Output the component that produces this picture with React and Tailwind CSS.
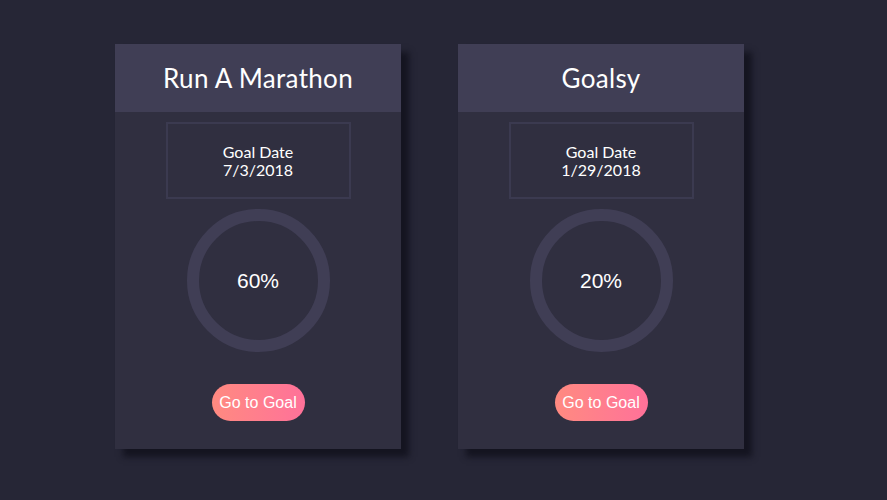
const goals = [
  { title: "Run A Marathon", date: "7/3/2018", progress: 60 },
  { title: "Goalsy", date: "1/29/2018", progress: 20 },
];

function GoalCard({ goal }) {
  return (
    <div className="flex w-[286px] flex-col bg-[#302f40] shadow-[8px_8px_6px_rgba(15,15,25,0.75)]">
      <div className="flex h-[68px] items-center justify-center bg-[#403e55]">
        <h2 className="text-[26px] font-normal tracking-[0.3px] text-white" style={{ fontFamily: "Lato, 'Open Sans', sans-serif" }}>
          {goal.title}
        </h2>
      </div>
      <div className="flex flex-col items-center pt-[10px] pb-[28px]">
        <div
          className="flex h-[77px] w-[185px] flex-col items-center justify-center border-2 border-[#3b3a50] text-[16px] leading-[18px] text-white"
          style={{ fontFamily: "Lato, 'Open Sans', sans-serif" }}
        >
          <span>Goal Date</span>
          <span>{goal.date}</span>
        </div>
        <div className="mt-[10px] flex h-[143px] w-[143px] items-center justify-center rounded-full border-[12px] border-[#403e55]">
          <span className="text-[21px] text-white" style={{ fontFamily: "'Liberation Sans', Arial, sans-serif" }}>
            {goal.progress}%
          </span>
        </div>
        <button
          className="mt-[32px] h-[37px] w-[93px] rounded-full bg-gradient-to-r from-[#ff8a80] to-[#ff7199] text-[16px] text-white"
          style={{ fontFamily: "'Liberation Sans', Arial, sans-serif" }}
        >
          Go to Goal
        </button>
      </div>
    </div>
  );
}

export default function App() {
  return (
    <div className="flex h-[500px] w-[887px] items-start gap-[57px] bg-[#262636] pl-[115px] pt-[44px]">
      {goals.map((goal) => (
        <GoalCard key={goal.title} goal={goal} />
      ))}
    </div>
  );
}
